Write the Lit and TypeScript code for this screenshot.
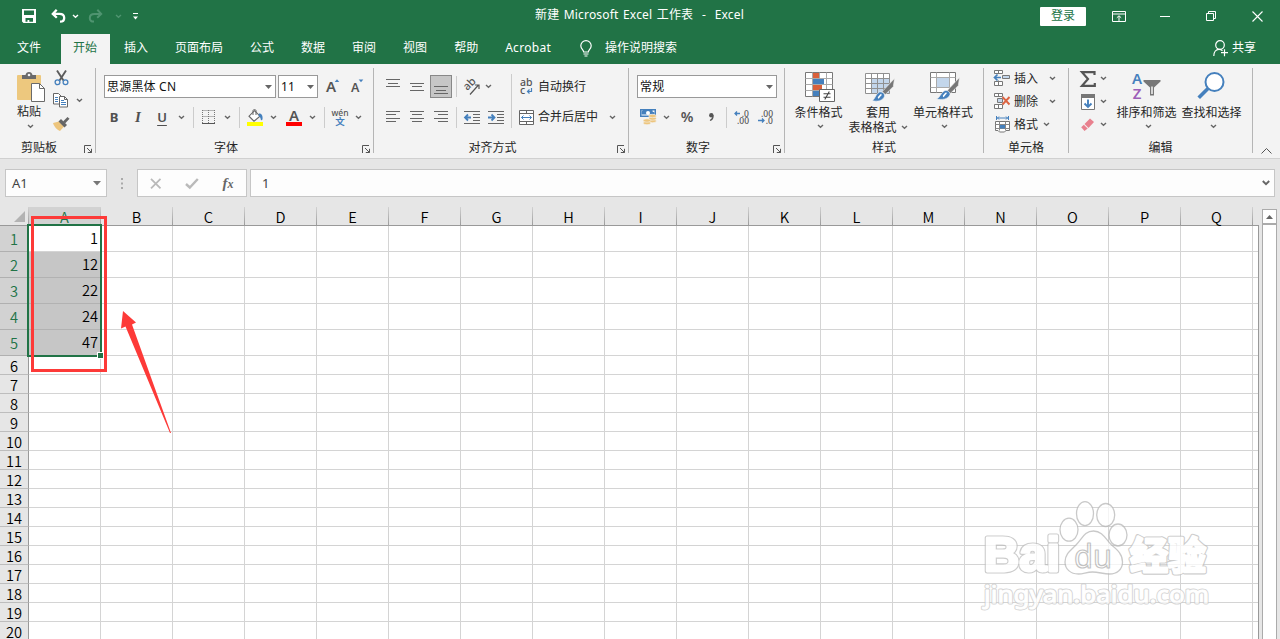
import { LitElement, html, svg, css, nothing, TemplateResult } from "lit";
import { customElement, property } from "lit/decorators.js";
import { classMap } from "lit/directives/class-map.js";

const icon = (w: number, h: number, body: unknown) =>
  html`<svg width=${w} height=${h} viewBox="0 0 ${w} ${h}" fill="none">${body}</svg>`;

const chevron = (color = "#666") =>
  icon(7, 5, svg`<path d="M1 1l2.500 2.200L6 1" stroke=${color} stroke-width="1.400"/>`);

const caret = icon(7, 4, svg`<path d="M0 0h7L3.500 4z" fill="#666"/>`);

const launcher = icon(9, 9, svg`<path d="M.5 8V.5H7M3 3l4.500 4.500M7.500 3.800V7.500H3.800" stroke="#555"/>`);

const bars = (spans: number[][], h = 14) =>
  icon(14, h, svg`${spans.map(([x, y, w]) => svg`<rect x=${x} y=${y} width=${w} height="1" fill="#666"/>`)}`);

const icons = {
  save: icon(14, 14, svg`<path fill-rule="evenodd" fill="#fff" d="M0 0h14v14H1.500L0 12.500zM2 1.500V6h10V1.500zM3.500 9v3.800h2V11h1.800v1.800h3.700V9z"/>`),
  undo: (c: string) => icon(15, 14, svg`<path d="M5.700.8L1.800 4.900l4 3.900M2 4.900h6.500c3 0 4.700 1.700 4.700 4s-1.700 3.700-4.200 3.700" stroke=${c} stroke-width="2.300"/>`),
  redo: (c: string) => icon(15, 14, svg`<path d="M9.300.8l3.900 4.100-4 3.900M13 4.900H6.500c-3 0-4.700 1.700-4.700 4s1.700 3.700 4.200 3.700" stroke=${c} stroke-width="2"/>`),
  customize: icon(5, 7, svg`<path d="M0 .5h5" stroke="#fff"/><path d="M0 3.500h5L2.500 6.500z" fill="#fff"/>`),
  ribbonMode: icon(14, 11, svg`<path d="M.5.5h13v10H.5zM1 3h12M7 10V5M4.800 6.800L7 4.700l2.200 2.100" stroke="#fff"/>`),
  minimize: icon(10, 1, svg`<path d="M0 .5h10" stroke="#fff"/>`),
  restore: icon(11, 11, svg`<path d="M.5 2.500h7v7h-7zM2.500 2V.5h7v7H8" stroke="#fff"/>`),
  close: icon(11, 11, svg`<path d="M.5.5l10 10M10.500.5l-10 10" stroke="#fff" stroke-width="1.100"/>`),
  share: icon(16, 17, svg`<circle cx="7" cy="5" r="4.300" stroke="#fff" stroke-width="1.200"/><path d="M.8 16c0-4 2.200-6.600 5.200-6.600 1.500 0 2.600.5 3.500 1.300M8 12.700h7M11.500 9.200v7" stroke="#fff" stroke-width="1.200"/>`),
  bulb: icon(12, 17, svg`<path d="M3.700 12c0-2-2.900-3-2.900-6.200a5.200 5.200 0 0 1 10.400 0C11.200 9 8.300 10 8.300 12zM3.500 14h5M4.500 16h3" stroke="#fff" stroke-width="1.200"/>`),
  paste: icon(29, 32, svg`<rect y="4" width="24" height="25" rx="1" fill="#edc87e"/><path d="M5 4h3.500C9 2 10 1 12 1s3 1 3.500 3H19v4H5z" fill="#6a6a6a"/><circle cx="12" cy="4" r="1.300" fill="#f3f3f3"/><path d="M14.500 12.500h8l5 5v13h-13z" fill="#fff" stroke="#6a6a6a"/><path d="M22.500 12.500v5h5" stroke="#6a6a6a"/>`),
  cut: icon(15, 16, svg`<path d="M3 .5l6.500 10M12 .5l-6.500 10" stroke="#5b5b5b" stroke-width="1.900"/><circle cx="3.500" cy="12.300" r="2.400" stroke="#4580bd" stroke-width="1.300"/><circle cx="11.500" cy="12.300" r="2.400" stroke="#4580bd" stroke-width="1.300"/>`),
  copy: icon(16, 15, svg`<path d="M.5.5h5l3 3V11h-8z" fill="#fff" stroke="#666"/><path d="M2 4.500h3M2 6.500h3M2 8.500h3" stroke="#4580bd"/><path d="M6.500 3.500h5l3 3v7.500h-8z" fill="#fff" stroke="#666"/><path d="M11.500 3.500v3h3" stroke="#666"/><path d="M8 7.500h3M8 9.500h5M8 11.500h5" stroke="#4580bd"/>`),
  brush: icon(17, 15, svg`<path d="M0 7l6-1.500 5 5L7 15C4 14 1 10.500 0 7z" fill="#edc57d"/><path d="M5.500 5.500L8 3l6 6-2.500 2.500z" fill="#666"/><path d="M10 5.500l4.500-4.500 2 1.800L12 7.500z" fill="#666"/>`),
  grow: icon(15, 14, svg`<text x="0" y="12" class="ic" font-size="15">A</text><path d="M8.700 2L11-.7 13.300 2z" fill="#4580bd"/>`),
  shrink: icon(13, 14, svg`<text x="0" y="12" class="ic" font-size="12.500">A</text><path d="M7.700-.5h4.600L10 2.200z" fill="#4580bd"/>`),
  border: icon(13, 14, svg`<path d="M.5.5h12M.5 6.500h12M.5 0v13M6.500 0v13M12.500 0v13" stroke="#777" stroke-dasharray="1 1"/><path d="M0 13.500h13" stroke="#555"/>`),
  fill: icon(17, 17, svg`<path d="M7.500 1.700l5.500 5.500-6 5-5-5z" fill="#fff" stroke="#666" stroke-width="1.100"/><path d="M6 6V1.500C6 .3 9 .3 9 1.500V6" stroke="#666"/><path d="M12 4.500c2.500 0 4 1.700 3.500 6l-1.500 1c-.3-2.500-1-4-2.500-4.500z" fill="#4580bd"/><rect y="13" width="16" height="4" fill="#ff0"/>`),
  fontColor: icon(16, 17, svg`<text x="8" y="12" class="ic" font-size="15" text-anchor="middle">A</text><rect y="13" width="16" height="4" fill="red"/>`),
  phonetic: icon(17, 18, svg`<text x="8" y="7.500" class="ic thin" font-size="8.500" text-anchor="middle">wén</text><text x="8" y="17" class="cjk" font-size="9.500" text-anchor="middle" fill="#4580bd">文</text>`),
  orient: icon(18, 16, svg`<text x="3" y="11" class="ic thin" font-size="11" transform="rotate(-45 5 10)">ab</text><path d="M7 15.500L15.500 6M12 6h4v4" stroke="#555" stroke-width="1.200"/>`),
  wrap: icon(13, 17, svg`<text x="0" y="7.500" class="ic thin" font-size="10.500">ab</text><text x="0" y="15.500" class="ic thin" font-size="10.500">c</text><path d="M11.500 10v3.500H8M9.500 11.500l-2 2 2 2" stroke="#4580bd" stroke-width="1.200"/>`),
  merge: icon(15, 15, svg`<path d="M.5.5h14v14H.5zM7.500.5V4M7.500 11v3.500" fill="#fff" stroke="#666"/><path d="M.5 3.500h14M.5 11.500h14" stroke="#666"/><path d="M2.500 7.500h10M4.500 5.500l-2 2 2 2M10.500 5.500l2 2-2 2" stroke="#4580bd"/>`),
  outdent: icon(16, 13, svg`<path d="M0 .5h16M9 3.500h7M9 6.500h7M9 9.500h7M0 12.500h16" stroke="#666"/><path d="M7 6.500H1M4 3.500l-3 3 3 3" stroke="#4580bd" stroke-width="1.800"/>`),
  indent: icon(16, 13, svg`<path d="M0 .5h16M9 3.500h7M9 6.500h7M9 9.500h7M0 12.500h16" stroke="#666"/><path d="M0 6.500h6M3.500 3.500l3 3-3 3" stroke="#4580bd" stroke-width="1.800"/>`),
  currency: icon(17, 16, svg`<path d="M0 0h16v8H0z" fill="#4580bd"/><path d="M1.500 1.500h13v5h-13z" fill="#fff"/><path d="M3.500.5h9v2l2 1v2h-13v-3z" fill="#4580bd"/><circle cx="8" cy="4" r="2" fill="#fff"/><g fill="#edc57d" stroke="#f3f3f3" stroke-width=".6"><ellipse cx="12.500" cy="12" rx="3.800" ry="1.700"/><ellipse cx="12.500" cy="9.500" rx="3.800" ry="1.700"/><ellipse cx="12.500" cy="7" rx="3.800" ry="1.700"/><ellipse cx="7" cy="14" rx="3.800" ry="1.700"/><ellipse cx="7" cy="11.500" rx="3.800" ry="1.700"/></g>`),
  percent: icon(14, 14, svg`<text x="7" y="12" class="ic" font-size="14.500" text-anchor="middle">%</text>`),
  comma: icon(5, 8, svg`<circle cx="2.300" cy="2.300" r="2.200" fill="#555"/><path d="M4 2.500c.2 2-.7 4-3 5" stroke="#555" stroke-width="1.300"/>`),
  moreDec: icon(15, 14, svg`<text x="15" y="6.500" class="ic thin" font-size="8.500" text-anchor="end">.0</text><text x="15" y="13.500" class="ic thin" font-size="8.500" text-anchor="end">.00</text><path d="M6 3.500H1M3 1.500l-2 2 2 2" stroke="#4580bd" stroke-width="1.300"/>`),
  lessDec: icon(15, 14, svg`<text x="15" y="6.500" class="ic thin" font-size="8.500" text-anchor="end">.00</text><text x="15" y="13.500" class="ic thin" font-size="8.500" text-anchor="end">.0</text><path d="M0 10.500h6M4 8.500l2 2-2 2" stroke="#4580bd" stroke-width="1.300"/>`),
  conditional: icon(31, 31, svg`<path d="M.5 1.500h27v24H.5z" fill="#fff" stroke="#777"/><path d="M.5 7.500h27M.5 13.500h27M.5 19.500h27M7.500 1.500v24M14.500 1.500v24M21.500 1.500v24" stroke="#aaa"/><path d="M8 2h6v5H8zM8 14h9v5H8z" fill="#d9603b"/><path d="M8 8h11v5H8zM8 20h6v5H8z" fill="#4580bd"/><path d="M14.500 18.500h15v12h-15z" fill="#fff" stroke="#666"/><path d="M18.500 22.800h7M18.500 26.200h7M24.300 20.500l-4.500 8" stroke="#444" stroke-width="1.100"/>`),
  tableStyle: icon(31, 30, svg`<path d="M.5 2.500h24v20H.5z" fill="#fff"/><path d="M7 8h18v15H7z" fill="#c3d6eb"/><path d="M.5 2.500h24v20H.5zM.5 7.500h24M.5 12.500h24M.5 17.500h24M6.500 2.500v20M12.500 2.500v20M18.500 2.500v20" stroke="#909090"/><path d="M29.500 7.500l-1.200 8-8 8-3-3z" fill="#777" stroke="#f3f3f3" stroke-width=".6"/><path d="M7 29.500c3-.5 3-6 7.500-8.500 2.500-.5 5.500 1.500 5 4.200C18 30 12 31 7 29.500z" fill="#4580bd" stroke="#f3f3f3" stroke-width=".6"/><path d="M13 27c1-.3 2-3 3.500-3.500" stroke="#fff" stroke-width="1.500"/>`),
  cellStyle: icon(31, 30, svg`<path d="M.5 1.500h25v20H.5z" fill="#fff" stroke="#777"/><path d="M.5 6.500h25M.5 16.500h25M6.500 1.500v20M19.500 1.500v20" stroke="#aaa"/><path d="M7 7h12v9H7z" fill="#c3d6eb"/><path d="M29.500 6.500l-1.200 8-8 8-3-3z" fill="#777" stroke="#f3f3f3" stroke-width=".6"/><path d="M6.500 28c3-.5 4-6 8.500-8.500 2.500-.5 5.500 1.500 5 4.200C18 28.500 12 29 6.500 28z" fill="#4580bd" stroke="#f3f3f3" stroke-width=".6"/><path d="M13 25.500c1-.3 2-3 3.500-3.500" stroke="#fff" stroke-width="1.500"/>`),
  insertCells: icon(17, 17, svg`<path d="M.5.5h8v3h-8zM4.500.5v3M.5 11.500h8v4h-8zM4.500 10.500v5" fill="#fff" stroke="#777"/><path d="M8.500 5.500h7v3h-7z" fill="#c3d6eb" stroke="#777"/><path d="M0 7.500h7M3.500 4.500l-3 3 3 3" stroke="#4580bd" stroke-width="1.700"/>`),
  deleteCells: icon(17, 17, svg`<path d="M.5.5h8v3h-8zM4.500.5v3M.5 11.500h8v4h-8zM4.500 11.500v4" fill="#fff" stroke="#777"/><path d="M3.500 5.500h5v4h-5z" fill="#c3d6eb" stroke="#777"/><path d="M8.500 4l7 7.500M15.500 4l-7 7.500" stroke="#dc6442" stroke-width="1.900"/>`),
  formatCells: icon(16, 17, svg`<path d="M1.500 0v4M13.500 0v4M2 2h11M4 .5L2.500 2 4 3.500M11 .5L12.500 2 11 3.500" stroke="#4580bd"/><path d="M.5 5.500h14v9H11L9.500 16h-5L3 14.500H.5z" fill="#fff" stroke="#777"/><path d="M.5 8.500h14M.5 12.500h14M4.500 5.500v9M10.500 5.500v9" stroke="#888"/><path d="M5 9h5v3.500H5z" fill="#4580bd"/>`),
  sum: icon(16, 16, svg`<path d="M14.500 4V1.200H2L8 8l-6 6.800h12.800V12" stroke="#555" stroke-width="2.200"/>`),
  fillDown: icon(14, 16, svg`<path d="M.5.5h13v15H.5z" fill="#fff" stroke="#777"/><path d="M0 0h14v4H0z" fill="#777"/><path d="M7 5.500v7M3.500 9.500L7 13l3.500-3.500" stroke="#4580bd" stroke-width="1.900"/>`),
  eraser: icon(14, 14, svg`<path d="M3.500 6L9 .5 13 4 7.500 10z" fill="#e8808e"/><path d="M2.800 6.800L.2 9.200 3.500 13l3.200-2.400z" fill="#e8808e"/>`),
  sort: icon(31, 30, svg`<text x="6" y="13" font-size="15" text-anchor="middle" class="az" fill="#4580bd">A</text><text x="6" y="27.500" font-size="15" text-anchor="middle" class="az" fill="#9d5fb8">Z</text><path d="M12.500 9h17v1.500l-6.500 6v8h-4v-8l-6.500-6z" fill="#777"/><path d="M20.300 15.500v7.500h1.400v-7.500z" fill="#fff"/>`),
  find: icon(29, 29, svg`<circle cx="17.500" cy="11" r="9" fill="#fff" stroke="#4580bd" stroke-width="2"/><path d="M11 17.500L1.700 26.800" stroke="#4580bd" stroke-width="3.600"/>`),
  collapse: icon(11, 6, svg`<path d="M.5 5.500l5-5 5 5" stroke="#555"/>`),
  cancel: icon(12, 11, svg`<path d="M1 .8l9.500 9.500M10.500.8L1 10.300" stroke="#bababa" stroke-width="1.800"/>`),
  enter: icon(14, 11, svg`<path d="M1 6l3.800 3.500L12.800 1" stroke="#bababa" stroke-width="2.400"/>`),
  corner: icon(11, 11, svg`<path d="M11 0v11H0z" fill="#b3b3b3"/>`),
};

const shared = css`
  :host { display: block; box-sizing: border-box; font: 12px/16px "Noto Sans", "Noto Sans CJK SC", sans-serif; color: #262626; }
  * { box-sizing: border-box; }
  svg { display: block; flex: none; overflow: visible; }
`;

@customElement("title-bar")
class TitleBar extends LitElement {
  static styles = [shared, css`
    :host { color: #fff; background: #217346; height: 64px; }
    .title { display: grid; grid-template-columns: 450px 1fr 450px; height: 32px; align-items: center; }
    .quick { display: grid; grid-template-columns: 30px 28px 6px 34px 12px 22px; justify-items: center; align-items: center; padding-left: 14px; }
    .name { text-align: center; white-space: pre; padding: 0 1px 2px 0; letter-spacing: .2px; word-spacing: 1px; }
    .window { display: grid; grid-template-columns: 46px 66px 26px 66px 26px; justify-content: end; justify-items: center; align-items: center; padding-right: 10px; height: 32px; }
    .login { background: #fff; color: #217346; width: 46px; height: 19px; line-height: 18px; text-align: center; border-radius: 1px; }
    .tabs { display: flex; height: 32px; align-items: stretch; }
    .tab { padding: 8px 13px 0 14px; white-space: nowrap; }
    .tab.file { padding-left: 17px; padding-right: 20px; }
    .tab.active { background: #f3f3f3; color: #217346; padding: 6px 13px 0 12px; margin-top: 2px; }
    .tab.latin { letter-spacing: .3px; }
    .hint { display: flex; gap: 13px; padding: 8px 0 0 16px; }
    .share { margin-left: auto; display: flex; gap: 3px; padding: 8px 24px 0 0; }
  `];

  render() {
    const tabs = ["文件", "开始", "插入", "页面布局", "公式", "数据", "审阅", "视图", "帮助", "Acrobat"];
    return html`
      <div class="title">
        <div class="quick">${icons.save}${icons.undo("#fff")}${chevron("#fff")}${icons.redo("#4f9470")}${chevron("#4f9470")}${icons.customize}</div>
        <div class="name">新建 Microsoft Excel 工作表  -  Excel</div>
        <div class="window">
          <span class="login">登录</span>${icons.ribbonMode}${icons.minimize}${icons.restore}${icons.close}
        </div>
      </div>
      <div class="tabs">
        ${tabs.map((t, i) => html`<span class=${classMap({ tab: true, file: i === 0, active: i === 1, latin: i === 9 })}>${t}</span>`)}
        <div class="hint">${icons.bulb}<span>操作说明搜索</span></div>
        <div class="share">${icons.share}<span>共享</span></div>
      </div>`;
  }
}

@customElement("ribbon-group")
class RibbonGroup extends LitElement {
  @property() label = "";
  @property({ type: Boolean }) launch = false;
  static styles = [shared, css`
    :host { display: flex; flex-direction: column; height: 94px; }
    .frame { display: grid; grid-template-rows: 70px 15px; border-right: 1px solid #b5b5b5; height: 85px; margin-top: 4px; }
    .foot { display: grid; grid-template-columns: 1fr; align-items: center; text-align: center; line-height: 15px; padding-top: 2px; }
    .foot.launch { grid-template-columns: 1fr 17px; }
    .foot svg { margin: 4px 0 0 6px; }
    .foot span { white-space: nowrap; }
  `];

  render() {
    return html`<div class="frame">
      <slot></slot>
      <div class=${classMap({ foot: true, launch: this.launch })}><span>${this.label}</span>${this.launch ? launcher : nothing}</div>
    </div>`;
  }
}

@customElement("excel-ribbon")
class ExcelRibbon extends LitElement {
  static styles = [shared, css`
    :host { display: flex; height: 95px; background: #f3f3f3; border-bottom: 1px solid #d0d0d0; }
    .w-clip { width: 96px; } .w-font { width: 278px; } .w-align { width: 255px; } .w-num { width: 156px; }
    .w-style { width: 199px; } .w-cell { width: 85px; } .w-edit { width: 184px; }
    .body { height: 70px; }
    .rows { display: grid; grid-template-rows: 23px 24px; row-gap: 7px; padding-top: 7px; align-content: start; }
    .row { display: grid; justify-items: center; align-items: center; }
    .clip { display: grid; grid-template-columns: 34px 1fr; padding-left: 14px; }
    .paste { display: flex; flex-direction: column; align-items: center; padding-top: 3px; }
    .paste span { margin: 0 0 4px -4px; line-height: 17px; white-space: nowrap; }
    .paste .down { margin-left: -1px; }
    .clip-tools { display: grid; grid-template: repeat(3, 23px) / 26px 10px; align-content: start; align-items: center; justify-items: center; margin-top: -2px; }
    .font1 { grid-template-columns: 174px 40px 30px 18px; padding-left: 8px; }
    .font2 { grid-template-columns: 24px 24px 24px 14px 11px 19px 18px 7px 24px 12px 30px 6px 19px 12px 24px; padding-left: 6px; }
    .combo { justify-self: start; display: flex; align-items: center; justify-content: space-between; border: 1px solid #999; background: #fff; height: 23px; width: 172px; padding: 0 3px 0 2px; color: #111; letter-spacing: .2px; }
    .combo.size { width: 40px; }
    .combo.num { width: 140px; margin-left: 8px; }
    .glyph { font-weight: 700; color: #505050; font-size: 13px; }
    .serif { font-family: "Liberation Serif", serif; font-size: 15px; font-style: italic; }
    .under { font-weight: 600; text-decoration: underline; text-underline-offset: 3px; }
    .sep { width: 1px; height: 21px; background: #ccc; }
    .align { display: grid; grid-template-columns: 130px 1px 1fr; padding-left: 7px; }
    .align .row { grid-template-columns: 24px 24px 24px 7px 24px 24px; justify-content: start; }
    .tall { height: 54px; width: 1px; background: #ccc; margin-top: 6px; }
    .align .merge { grid-template-columns: 23px 61px 26px; padding-left: 3px; }
    .pressed { width: 22px; height: 23px; background: #c6c6c6; border: 1px solid #888; display: grid; place-items: center; }
    .near { justify-self: start; margin-left: 1px; }
    .text { justify-self: start; white-space: nowrap; }
    .num2 { grid-template-columns: 24px 12px 30px 18px 13px 16px 32px; padding-left: 7px; justify-content: start; }
    .style { display: grid; grid-template-columns: 55px 64px 66px; padding-left: 6px; }
    .style .pic { padding-left: 4px; }
    .edit { display: grid; grid-template-columns: 45px 65px 65px; }
    .big { display: flex; flex-direction: column; align-items: center; white-space: nowrap; }
    .big .pic { height: 32px; padding-top: 3px; margin-bottom: 5px; }
    .big span { line-height: 15px; height: 15px; }
    .big .split { display: flex; align-items: center; gap: 4px; }
    .big .down { margin-top: 4px; padding-left: 3px; }
    .cells { display: grid; grid-template: repeat(3, 23px) / 23px 32px 12px; padding-left: 7px; align-items: center; justify-items: center; align-content: start; margin-top: -1px; }
    .early { margin-left: -12px; }
    .mini { display: grid; grid-template: repeat(3, 23px) / 19px 13px; padding-left: 9px; align-items: center; justify-items: center; align-content: start; margin-top: -1px; }
    .end { flex: 1; display: flex; align-items: flex-end; justify-content: center; padding-bottom: 4px; }
    .ic { font-family: "Noto Sans", sans-serif; font-weight: 600; fill: #555; }
    .thin { font-weight: 500; }
    .cjk { font-family: "Noto Sans CJK SC", sans-serif; font-weight: 700; }
    .az { font-family: "Noto Sans", sans-serif; font-weight: 600; }
  `];

  private big(pic: TemplateResult, text: string, second?: string) {
    return html`<div class="big"><div class="pic">${pic}</div><span>${text}</span>
      ${second ? html`<div class="split"><span>${second}</span>${chevron()}</div>` : html`<div class="down">${chevron()}</div>`}</div>`;
  }

  render() {
    const sep = html`<i class="sep"></i>`;
    return html`
      <ribbon-group class="w-clip" label="剪贴板" launch>
        <div class="body clip">
          <div class="paste"><div class="pic">${icons.paste}</div><span>粘贴</span><div class="down">${chevron()}</div></div>
          <div class="clip-tools">${icons.cut}<i></i>${icons.copy}${chevron()}${icons.brush}</div>
        </div>
      </ribbon-group>
      <ribbon-group class="w-font" label="字体" launch>
        <div class="body rows">
          <div class="row font1">
            <div class="combo">思源黑体 CN${caret}</div><div class="combo size">11${caret}</div>${icons.grow}${icons.shrink}
          </div>
          <div class="row font2">
            <span class="glyph">B</span><span class="glyph serif">I</span><span class="glyph under">U</span>${chevron()}${sep}
            ${icons.border}${chevron()}${sep}${icons.fill}${chevron()}${icons.fontColor}${chevron()}${sep}${icons.phonetic}${chevron()}
          </div>
        </div>
      </ribbon-group>
      <ribbon-group class="w-align" label="对齐方式" launch>
        <div class="body align">
          <div class="rows">
            <div class="row">
              ${bars([[0, -1, 14], [2, 3, 10], [0, 6, 14]])}${bars([[0, 3, 14], [2, 6, 10], [0, 10, 14]])}
              <span class="pressed">${bars([[0, 6, 14], [2, 10, 10], [0, 13, 14]])}</span>${sep}${icons.orient}<div class="near">${chevron()}</div>
            </div>
            <div class="row">
              ${bars([[0, 3, 14], [0, 6, 10], [0, 10, 14], [0, 13, 10]], 18)}${bars([[0, 3, 14], [2, 6, 10], [0, 10, 14], [2, 13, 10]], 18)}
              ${bars([[0, 3, 14], [4, 6, 10], [0, 10, 14], [4, 13, 10]], 18)}${sep}${icons.outdent}${icons.indent}
            </div>
          </div>
          <i class="tall"></i>
          <div class="rows">
            <div class="row merge">${icons.wrap}<span class="text">自动换行</span></div>
            <div class="row merge">${icons.merge}<span class="text">合并后居中</span>${chevron()}</div>
          </div>
        </div>
      </ribbon-group>
      <ribbon-group class="w-num" label="数字" launch>
        <div class="body rows">
          <div class="combo num">常规${caret}</div>
          <div class="row num2">${icons.currency}${chevron()}${icons.percent}${icons.comma}${sep}${icons.moreDec}${icons.lessDec}</div>
        </div>
      </ribbon-group>
      <ribbon-group class="w-style" label="样式">
        <div class="body style">
          ${this.big(icons.conditional, "条件格式")}${this.big(icons.tableStyle, "套用", "表格格式")}${this.big(icons.cellStyle, "单元格样式")}
        </div>
      </ribbon-group>
      <ribbon-group class="w-cell" label="单元格">
        <div class="body cells">
          ${icons.insertCells}<span class="text">插入</span>${chevron()}
          ${icons.deleteCells}<span class="text">删除</span>${chevron()}
          ${icons.formatCells}<span class="text">格式</span><div class="early">${chevron()}</div>
        </div>
      </ribbon-group>
      <ribbon-group class="w-edit" label="编辑">
        <div class="body edit">
          <div class="mini">${icons.sum}${chevron()}${icons.fillDown}${chevron()}${icons.eraser}${chevron()}</div>
          ${this.big(icons.sort, "排序和筛选")}${this.big(icons.find, "查找和选择")}
        </div>
      </ribbon-group>
      <div class="end">${icons.collapse}</div>`;
  }
}

@customElement("formula-bar")
class FormulaBar extends LitElement {
  static styles = [shared, css`
    :host { display: flex; height: 48px; padding: 10px 5px 10px; background: #e6e6e6; color: #444; font-size: 13px; }
    .box { background: #fdfdfd; border: 1px solid #c6c6c6; display: flex; align-items: center; height: 28px; }
    .ref { width: 102px; justify-content: space-between; padding: 0 5px 0 6px; }
    .dots { width: 30px; display: grid; place-items: center; }
    .tools { width: 110px; display: grid; grid-template-columns: repeat(3, 36px); justify-items: center; }
    .fx { font: italic 700 15px/16px "Liberation Serif", serif; color: #666; }
    .fx small { font-size: 12px; }
    .value { flex: 1; margin-left: 3px; padding: 0 4px 0 11px; justify-content: space-between; }
  `];

  render() {
    return html`
      <div class="box ref">A1${icon(8, 5, svg`<path d="M0 0h8L4 4.500z" fill="#777"/>`)}</div>
      <div class="dots">${icon(2, 11, svg`<path d="M0 0h2v2H0zM0 4.500h2v2H0zM0 9h2v2H0z" fill="#aaa"/>`)}</div>
      <div class="box tools">${icons.cancel}${icons.enter}<span class="fx">f<small>x</small></span></div>
      <div class="box value">1${icon(8, 6, svg`<path d="M.8 1L4 4.200 7.200 1" stroke="#666" stroke-width="1.900"/>`)}</div>`;
  }
}

@customElement("sheet-grid")
class SheetGrid extends LitElement {
  static styles = [shared, css`
    :host { display: grid; grid-template-columns: 1259px 1fr; height: 432px; overflow: hidden; background: #e6e6e6; position: relative; font: 350 14.67px/18px "Noto Sans CJK SC", sans-serif; color: #000; }
    .head { display: grid; grid-template-columns: 29px repeat(17, 72px) 1fr; height: 19px; border-bottom: 1px solid #999; }
    .head span { text-align: center; height: 18px; line-height: 20px; border-right: 1px solid; border-image: linear-gradient(#d5d5d5, #999) 1; }
    .head .all { display: grid; justify-items: end; padding: 4px 3px 0 0; }
    .head .picked { background: #d2d2d2; color: #217346; }
    .lines { border-right: 1px solid #999; background: #fff; }
    .line { display: grid; grid-template: 19px / 29px repeat(17, 72px) 1fr; }
    .line.high { grid-template-rows: 26px; }
    .line span { border-right: 1px solid #d4d4d4; border-bottom: 1px solid #d4d4d4; height: 100%; }
    .line span:last-child { border-right: 0; }
    .line .num { background: #e6e6e6; border-right-color: #999; border-bottom-color: #bdbdbd; text-align: center; line-height: 20px; }
    .line.high .num { background: #d2d2d2; color: #217346; line-height: 26px; border-bottom-color: #b0b0b0; }
    .line .val { text-align: right; line-height: 24px; padding-right: 2px; }
    .line .sel { background: #c6c6c6; border-bottom-color: #b2b2b2; }
    .scroll { margin: 2px 3px 0 3px; display: grid; grid-template-rows: 15px 1fr; width: 15px; }
    .scroll div { background: #fff; border: 1px solid #ababab; display: grid; place-items: center; }
    .selection { position: absolute; left: 27px; top: 17px; width: 75px; height: 133px; border: 2px solid #217346; }
    .handle { position: absolute; left: 97px; top: 145px; width: 7px; height: 7px; background: #217346; border: 1px solid #fff; }
    .mark { position: absolute; left: 31px; top: 9px; width: 76px; height: 156px; border: 3px solid #fd3a38; }
    .arrow { position: absolute; left: 120px; top: 102px; }
    .stamp { position: absolute; left: 970px; top: 283px; }
    .baidu { font-family: "Liberation Sans", sans-serif; font-weight: 700; }
    .hei { font-family: "Noto Sans CJK SC", sans-serif; font-weight: 700; }
    .url { font-family: "Noto Sans", sans-serif; font-weight: 400; }
  `];

  private stamp() {
    const words = svg`
      <text class="baidu" x="14" y="80.500" font-size="48" textLength="76" lengthAdjust="spacingAndGlyphs">Bai</text>
      <text class="hei" x="160" y="79" font-size="38" textLength="76">经验</text>`;
    const paw = svg`
      <ellipse cx="99" cy="39.700" rx="9" ry="11.500"/><ellipse cx="115" cy="23.700" rx="8.500" ry="12"/>
      <ellipse cx="135.700" cy="25" rx="9" ry="11.500"/><ellipse cx="148" cy="45" rx="9" ry="11"/>
      <path d="M123.500 41c9 0 12 8 18 14 6 5 11 9 11 17 0 8-6 12-13 12-6 0-11-2-17-2s-9 2-14 2c-8 0-13.500-5-13.500-12 0-8 6-12 11-17 6-6 8.500-14 17.500-14z"/>`;
    const url = svg`<text class="url" x="14" y="113" font-size="23.500" textLength="225" lengthAdjust="spacingAndGlyphs">jingyan.baidu.com</text>`;
    return html`<svg class="stamp" width="250" height="130" viewBox="0 0 250 130" stroke-linejoin="round">
      <g opacity=".75">
        <g stroke="#bcbcbc" stroke-width="5" fill="#bcbcbc">${words}</g>
        <g stroke="#fff" stroke-width="2.800" fill="#fff">${words}</g>
        <g stroke="#b8b8b8" stroke-width="1.300" fill="#fff">${paw}</g>
        <text class="url" x="104" y="77.500" font-size="32" textLength="38" lengthAdjust="spacingAndGlyphs" fill="#fff" stroke="#b0b0b0" stroke-width="1.200">du</text>
        <g stroke="#c8c8c8" stroke-width="2.800" fill="#c8c8c8">${url}</g>
        <g stroke="#fff" stroke-width="1" fill="#fff">${url}</g>
      </g>
    </svg>`;
  }

  render() {
    const cols = [..."ABCDEFGHIJKLMNOPQ"];
    const values = [1, 12, 22, 24, 47];
    return html`
      <div>
        <div class="head">
          <span class="all">${icons.corner}</span>
          ${cols.map((c, i) => html`<span class=${i === 0 ? "picked" : ""}>${c}</span>`)}
        </div>
        <div class="lines">
          ${Array.from({ length: 20 }, (_, r) => html`<div class=${classMap({ line: true, high: r < 5 })}>
            <span class="num">${r + 1}</span>
            <span class=${classMap({ val: true, sel: r > 0 && r < 5 })}>${values[r] ?? ""}</span>
            ${cols.map(() => html`<span></span>`)}
          </div>`)}
        </div>
      </div>
      <div class="scroll"><div>${icon(7, 4, svg`<path d="M0 4h7L3.500 0z" fill="#666"/>`)}</div><div></div></div>
      <i class="selection"></i><i class="handle"></i><i class="mark"></i>
      <svg class="arrow" width="54" height="126" viewBox="0 0 54 126"><path d="M3 2L16 13.500l-4 2L51 124 50 124 5.500 17.500 1 19.500z" fill="#fd3a38"/></svg>
      ${this.stamp()}`;
  }
}

@customElement("app-root")
class AppRoot extends LitElement {
  static styles = css`
    :host { display: block; width: 1280px; height: 639px; overflow: hidden; background: #e6e6e6; }
  `;

  render() {
    return html`<title-bar></title-bar><excel-ribbon></excel-ribbon><formula-bar></formula-bar><sheet-grid></sheet-grid>`;
  }
}
